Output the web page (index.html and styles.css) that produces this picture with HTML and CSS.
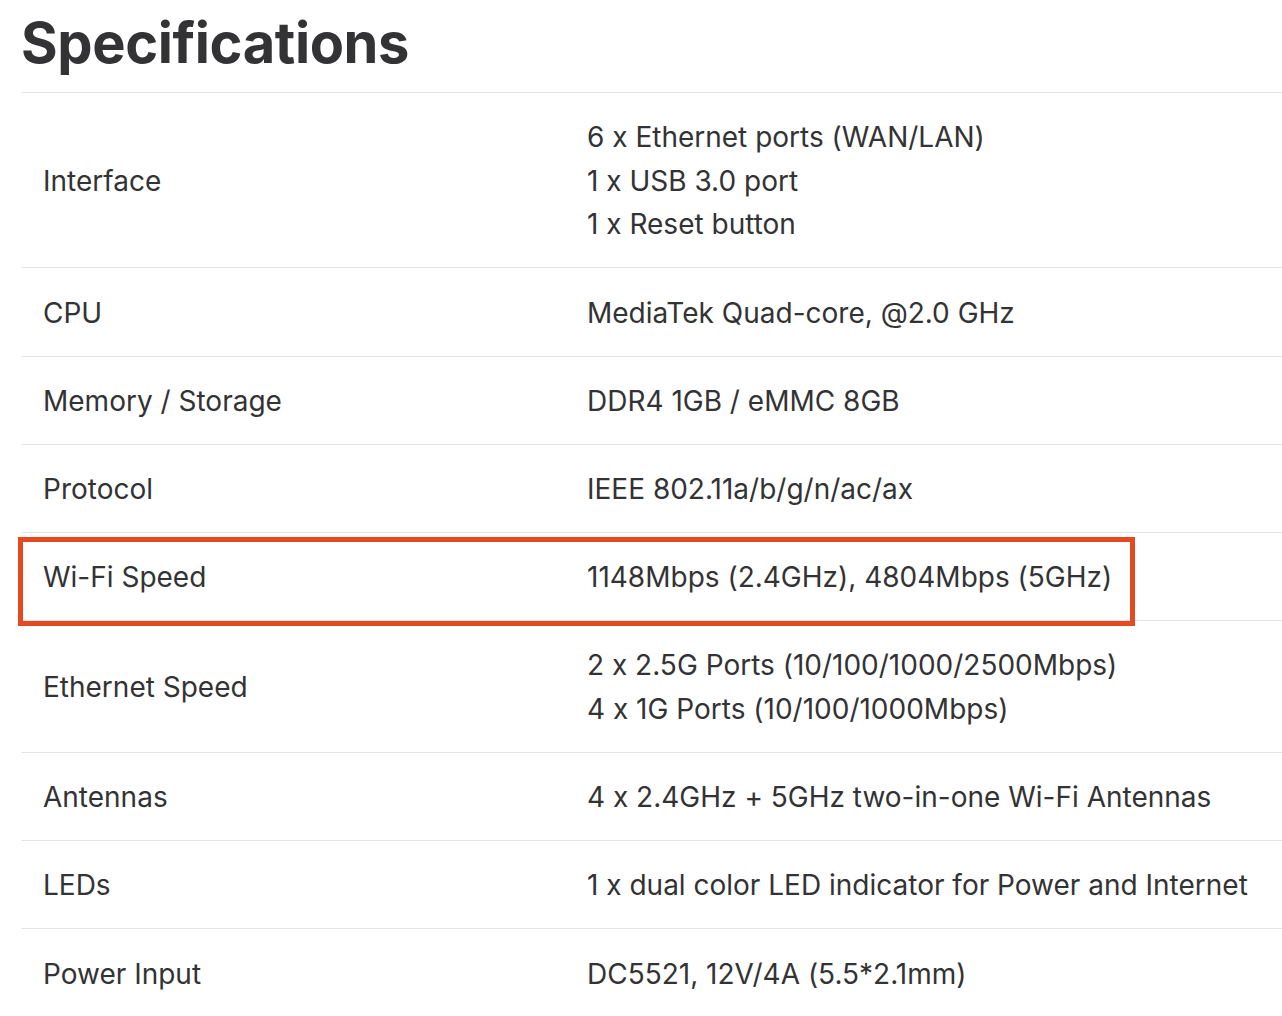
FILE: index.html
```html
<!DOCTYPE html>
<html lang="en">
<head>
<meta charset="utf-8">
<title>Specifications</title>
<link rel="stylesheet" href="styles.css">
</head>
<body>
<main class="page">
  <h1 class="title">Specifications</h1>
  <div class="specs">
    <table class="spec-table">
      <tbody>
        <tr>
          <td class="label">Interface</td>
          <td class="value">6 x Ethernet ports (WAN/LAN)<br>1 x USB 3.0 port<br>1 x Reset button</td>
        </tr>
        <tr>
          <td class="label">CPU</td>
          <td class="value">MediaTek Quad-core, @2.0 GHz</td>
        </tr>
        <tr>
          <td class="label">Memory / Storage</td>
          <td class="value">DDR4 1GB / eMMC 8GB</td>
        </tr>
        <tr>
          <td class="label">Protocol</td>
          <td class="value">IEEE 802.11a/b/g/n/ac/ax</td>
        </tr>
        <tr class="highlight-row">
          <td class="label">Wi-Fi Speed</td>
          <td class="value">1148Mbps (2.4GHz), 4804Mbps (5GHz)</td>
        </tr>
        <tr>
          <td class="label">Ethernet Speed</td>
          <td class="value">2 x 2.5G Ports (10/100/1000/2500Mbps)<br>4 x 1G Ports (10/100/1000Mbps)</td>
        </tr>
        <tr>
          <td class="label">Antennas</td>
          <td class="value">4 x 2.4GHz + 5GHz two-in-one Wi-Fi Antennas</td>
        </tr>
        <tr>
          <td class="label">LEDs</td>
          <td class="value">1 x dual color LED indicator for Power and Internet</td>
        </tr>
        <tr>
          <td class="label">Power Input</td>
          <td class="value">DC5521, 12V/4A (5.5*2.1mm)</td>
        </tr>
      </tbody>
    </table>
    <div class="annotation" aria-hidden="true"></div>
  </div>
</main>
</body>
</html>
```

FILE: styles.css
```css
html, body {
  margin: 0;
  padding: 0;
  background: #ffffff;
}

body {
  font-family: Inter, "Noto Sans", "Liberation Sans", sans-serif;
  font-feature-settings: "calt" 0;
  color: #333335;
  overflow: hidden;
}

.page {
  padding-left: 21px;
}

.title {
  margin: 0;
  height: 92px;
  box-sizing: border-box;
  padding-top: 9px;
  font-size: 56px;
  line-height: 68px;
  font-weight: 700;
  letter-spacing: -0.4px;
  color: #333336;
}

.specs {
  position: relative;
}

.spec-table {
  width: 1261px;
  border-collapse: collapse;
  table-layout: fixed;
}

.spec-table td {
  border-top: 1px solid #e3e3e5;
  padding: 23.3px 22px 20.3px;
  font-size: 28px;
  line-height: 43.6px;
  vertical-align: middle;
  text-align: left;
}

.spec-table .label {
  width: 500px;
}

.annotation {
  position: absolute;
  left: -3px;
  top: 445px;
  width: 1117px;
  height: 89px;
  box-sizing: border-box;
  border: 5px solid #e44a1f;
  pointer-events: none;
}
```
